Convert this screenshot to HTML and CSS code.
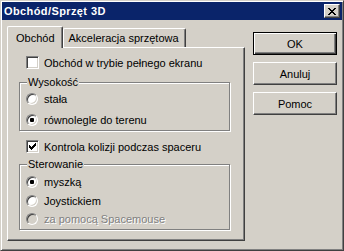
FILE: index.html
```html
<!DOCTYPE html>
<html lang="pl">
<head>
    <meta charset="UTF-8">
    <title>Obchód/Sprzęt 3D</title>
    <link rel="stylesheet" href="styles.css">
</head>
<body>
    <div class="window">
        <div class="titlebar">
            <span class="title">Obchód/Sprzęt 3D</span>
            <button class="close" type="button">
                <svg width="8" height="7" viewBox="0 0 8 7"><path d="M0 0h2v1h-2zM6 0h2v1h-2zM1 1h2v1h-2zM5 1h2v1h-2zM2 2h4v1h-4zM3 3h2v1h-2zM2 4h4v1h-4zM1 5h2v1h-2zM5 5h2v1h-2zM0 6h2v1h-2zM6 6h2v1h-2z" fill="#000"/></svg>
            </button>
        </div>

        <div class="client">
            <div class="tabs">
                <div class="tab-strip">
                    <div class="tab active">Obchód</div>
                    <div class="tab">Akceleracja sprzętowa</div>
                </div>
                <div class="panel">
                    <label class="row row-first"><span class="check"></span>Obchód w trybie pełnego ekranu</label>

                    <div class="group group-height">
                        <span class="group-title">Wysokość</span>
                        <label class="row r1"><span class="radio"></span>stała</label>
                        <label class="row r2"><span class="radio on"></span>równolegle do terenu</label>
                    </div>

                    <label class="row row-collide"><span class="check"><svg width="7" height="7" viewBox="0 0 7 7"><path d="M6 0h1v1h-1zM5 1h2v1h-2zM0 2h1v1h-1zM4 2h3v1h-3zM0 3h2v1h-2zM3 3h3v1h-3zM0 4h5v1h-5zM1 5h3v1h-3zM2 6h1v1h-1z" fill="#000"/></svg></span>Kontrola kolizji podczas spaceru</label>

                    <div class="group group-control">
                        <span class="group-title">Sterowanie</span>
                        <label class="row s1"><span class="radio on"></span>myszką</label>
                        <label class="row s2"><span class="radio"></span>Joystickiem</label>
                        <label class="row s3 disabled"><span class="radio"></span>za pomocą Spacemouse</label>
                    </div>
                </div>
            </div>

            <div class="buttons">
                <button class="btn default" type="button">OK</button>
                <button class="btn" type="button">Anuluj</button>
                <button class="btn" type="button">Pomoc</button>
            </div>
        </div>
    </div>
</body>
</html>
```

FILE: styles.css
```css
body {
    margin: 0;
    background-color: #d4d0c8;
    font-family: "Liberation Sans", Arial, sans-serif;
    font-size: 11px;
    color: #000;
}

.window {
    width: 344px;
    height: 251px;
    box-sizing: border-box;
    padding: 1px;
    background-color: #d4d0c8;
    border: 1px solid;
    border-color: #d4d0c8 #404040 #404040 #d4d0c8;
    box-shadow: inset 1px 1px #fff, inset -1px -1px #808080;
}

.titlebar {
    height: 18px;
    display: flex;
    align-items: center;
    justify-content: space-between;
    background-color: #0a246a;
    padding-left: 2px;
}

.title {
    color: #fff;
    font-weight: bold;
    letter-spacing: 0.4px;
}

.close {
    width: 16px;
    height: 14px;
    margin-right: 2px;
    padding: 0;
    display: flex;
    align-items: center;
    justify-content: center;
    background-color: #d4d0c8;
    border: 1px solid;
    border-color: #fff #404040 #404040 #fff;
    box-shadow: inset -1px -1px #808080;
}

.client {
    display: flex;
    padding: 0 3px 0 5px;
}

.tabs {
    width: 238px;
}

.tab-strip {
    height: 27px;
    display: flex;
    align-items: flex-end;
}

.tab {
    height: 19px;
    box-sizing: border-box;
    padding: 3px 6px 0 5px;
    border: 1px solid;
    border-bottom: none;
    border-color: #fff #404040 #fff #fff;
    border-radius: 2px 2px 0 0;
    box-shadow: inset -1px 0 #808080;
    white-space: nowrap;
}

.tab.active {
    height: 22px;
    margin-bottom: -1px;
    padding: 5px 7px 0 8px;
    background-color: #d4d0c8;
    position: relative;
    z-index: 1;
}

.panel {
    height: 194px;
    box-sizing: border-box;
    border: 1px solid;
    border-color: #fff #404040 #404040 #fff;
    box-shadow: inset -1px -1px #808080;
    padding-left: 11px;
}

.row {
    display: flex;
    align-items: center;
    height: 13px;
    white-space: nowrap;
}

.check {
    width: 13px;
    height: 13px;
    box-sizing: border-box;
    margin-right: 5px;
    display: flex;
    align-items: center;
    justify-content: center;
    background-color: #fff;
    border: 1px solid;
    border-color: #808080 #fff #fff #808080;
    box-shadow: inset 1px 1px #404040, inset -1px -1px #d4d0c8;
    flex-shrink: 0;
}

.radio {
    width: 12px;
    height: 12px;
    box-sizing: border-box;
    margin-right: 6px;
    border-radius: 50%;
    display: flex;
    align-items: center;
    justify-content: center;
    background-color: #fff;
    border: 1px solid;
    border-color: #808080 #fff #fff #808080;
    box-shadow: inset 1px 1px #404040, inset -1px -1px #d4d0c8;
    flex-shrink: 0;
}

.radio.on::after {
    content: "";
    width: 4px;
    height: 4px;
    border-radius: 1px;
    background-color: #000;
}

.disabled {
    color: #808080;
    text-shadow: 1px 1px #fff;
}

.disabled .radio {
    background-color: #d4d0c8;
}

.row-first {
    margin: 8px 0 0 7px;
}

.group {
    width: 211px;
    box-sizing: border-box;
    border: 1px solid #808080;
    box-shadow: inset 1px 1px #fff, 1px 1px #fff;
    padding-left: 6px;
}

.group-title {
    display: block;
    width: fit-content;
    height: 13px;
    line-height: 13px;
    margin: -7px 0 0 1px;
    padding: 0 1px;
    background-color: #d4d0c8;
}

.group-height {
    height: 49px;
    margin-top: 13px;
}

.group-height .r1 {
    margin-top: 3px;
}

.group-height .r2 {
    margin-top: 8px;
}

.row-collide {
    margin: 9px 0 0 7px;
}

.group-control {
    height: 66px;
    margin-top: 11px;
}

.group-control .s1 {
    margin-top: 4px;
}

.group-control .s2 {
    margin-top: 6px;
}

.group-control .s3 {
    margin-top: 5px;
}

.buttons {
    margin-left: 8px;
    padding-top: 12px;
    display: flex;
    flex-direction: column;
    gap: 7px;
}

.btn {
    width: 84px;
    height: 23px;
    padding: 0;
    font-family: inherit;
    font-size: 11px;
    color: #000;
    background-color: #d4d0c8;
    border: 1px solid;
    border-color: #fff #404040 #404040 #fff;
    box-shadow: inset -1px -1px #808080;
}

.btn.default {
    border-color: #000;
    box-shadow: inset 1px 1px #fff, inset -1px -1px #404040, inset -2px -2px #808080;
}
```
